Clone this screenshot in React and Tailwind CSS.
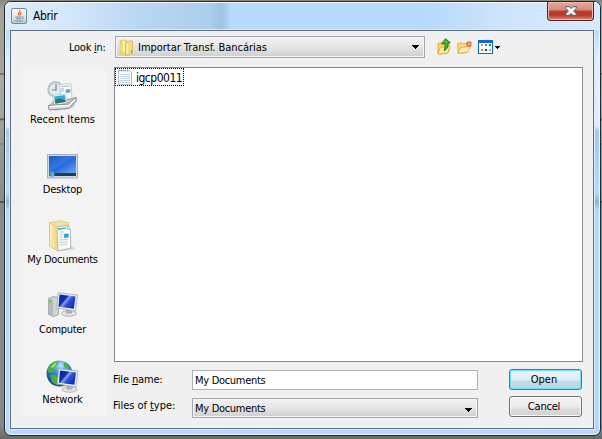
import React from "react";

const Label = ({ className = "", children }) => (
  <span className={`block whitespace-nowrap leading-[14px] ${className}`}>{children}</span>
);

const JavaIcon = () => (
  <svg width="16" height="16" viewBox="0 0 16 16">
    <defs>
      <linearGradient id="jv" x1="0" y1="0" x2="0" y2="1">
        <stop offset="0" stopColor="#fff" />
        <stop offset="1" stopColor="#c4c9cf" />
      </linearGradient>
    </defs>
    <rect x="0.5" y="0.5" width="15" height="15" rx="1.5" fill="url(#jv)" stroke="#7c8794" />
    <path d="M9 2c1 1.500-2 2.500-1.500 4 .2.700.8 1 .6 1.800M10.500 4.500c-1.500 1-1.500 1.500-.8 2.500" fill="none" stroke="#e8702a" strokeWidth="1.300" />
    <path d="M4.500 9h6M5 10.800h5M3.500 13h8.500M11 9c2-.5 2 1.500 0 2" fill="none" stroke="#6a87a6" strokeWidth=".9" />
  </svg>
);

const FolderIcon = () => (
  <svg width="16" height="17" viewBox="0 0 16 17">
    <path d="M1 1.500 7 1l1 .8V15l-1.500.8L1 14.500z" fill="#f3db7c" stroke="#e0c05c" strokeWidth=".7" />
    <path d="M6.500 3.500 12.500 1.500l1 .7v12.500l-7 1.500z" fill="#f6dd83" stroke="#d6b450" strokeWidth=".8" />
    <path d="M4 2h2v11l-2-.5z" fill="#fff3bd" />
    <path d="M7.500 4.500 9 4v11l-1.500.3z" fill="#fff0ac" />
    <path d="M12.500 11v3" stroke="#68add0" strokeWidth="1.200" />
  </svg>
);

const FileIcon = () => (
  <svg width="14" height="16" viewBox="0 0 14 16">
    <path d="M.5 1.500h11l2 2v12H.5z" fill="#f4f9fc" stroke="#a9b3b9" strokeWidth=".9" />
    <path d="M2 5.500h10M2 7.500h10M2 9.500h10M2 11.500h10M2 13.500h10" stroke="#bcd2df" strokeWidth=".9" />
    <path d="M1 1.500h10" stroke="#8d9a9f" strokeWidth="1.500" strokeDasharray="1 1" />
  </svg>
);

const UpIcon = () => (
  <svg width="15" height="17" viewBox="0 0 15 17">
    <path d="M1 5.500 4 4.500l1 1.500 7-.5V13l-2 2.500-9 .5z" fill="#f6d56b" stroke="#dca832" strokeWidth=".9" />
    <path d="M3.500 9.500 13 8.500 10.500 15 1 16z" fill="#fff0a0" stroke="#dca832" strokeWidth=".8" />
    <path d="M4.500 5.800 8.500.8l4.800 3.900-2.300.3c.3 4-.9 6.500-4 7.800 1.300-2.300 1.400-4.500.6-7.200z" fill="#4bb53c" stroke="#16701b" strokeWidth=".9" />
  </svg>
);

const NewFolderIcon = () => (
  <svg width="16" height="14" viewBox="0 0 16 14">
    <path d="M.7 3.500 4.500 2.500l1 1.300 5.500-.5V11l-1.500 1.500L1 13.300z" fill="#f6d97a" stroke="#dca94a" strokeWidth=".9" />
    <path d="M3.500 7.500 13.500 6.300 10.500 12.300 1 13.300z" fill="#fff0aa" stroke="#dca94a" strokeWidth=".9" />
    <path d="M12 1v6M9 4h6M9.800 1.800l4.400 4.400M14.200 1.800 9.800 6.200" stroke="#f0592d" strokeWidth="1.200" />
    <circle cx="12" cy="4" r="1.300" fill="#ffb27c" />
  </svg>
);

const ViewIcon = () => (
  <svg width="23" height="15" viewBox="0 0 23 15" shapeRendering="crispEdges">
    <rect x="0" y="0" width="15" height="14" fill="#0b67d5" />
    <rect x="1" y="3" width="13" height="10" fill="#fff" />
    <path d="M3 4h2v2H3z" fill="#a99bd0" />
    <path d="M7 4h2v2H7z" fill="#4b78cc" />
    <path d="M11 4h2v2h-2z" fill="#168f2a" />
    <path d="M3 9h2v2H3z" fill="#fa7558" />
    <path d="M7 9h2v2H7z" fill="#123f9c" />
    <path d="M11 9h2v2h-2z" fill="#d09a20" />
    <path d="M17 6h5v1h-1v1h-1v1h-1V8h-1V7h-1z" fill="#000" />
  </svg>
);

const RecentIcon = () => (
  <svg width="32" height="32" viewBox="0 0 32 32">
    <path d="M6 29 28 17l3 3-5 8-18 3z" fill="#000" opacity=".13" />
    <circle cx="8.500" cy="9.500" r="7.300" fill="#dfe9ee" stroke="#b0bfc8" strokeWidth="1.800" />
    <path d="M9 4v6H5" fill="none" stroke="#6f8896" strokeWidth="1.200" />
    <path d="M12.500 4.500 24 3.500l1 15-11 2z" fill="#fbfcfc" stroke="#b5bfc5" strokeWidth=".8" />
    <path d="M14 6.500 22.500 6M14 9l3-.2M14 11h3" stroke="#a4b4be" strokeWidth="1" />
    <path d="M18.500 9.500 23 9l.4 3.500-4.500.5z" fill="#56abc9" />
    <path d="m2 26 5-5.500L23.500 19 29 17.500 23.500 26z" fill="#c3c6c7" stroke="#8e9292" strokeWidth=".7" />
    <path d="M6 15.500 18.500 14l1.500 9-12.500 2z" fill="#fff" stroke="#a7bdc6" strokeWidth=".6" />
    <path d="M7 16.500 17.800 15l.8 4-10.800 1.500z" fill="#36a9e0" />
    <path d="m7.700 20 4-1.500 6.700 1 .4 2.500L8.300 23.800z" fill="#287868" />
    <path d="M1.500 25.500 21.500 24 29 17v3.500L22 28.500 2 30z" fill="#d8d9d9" stroke="#777b7b" strokeWidth=".8" />
    <path d="m3 26.700 19-1.400 6-5.500" fill="none" stroke="#fff" strokeWidth="1.300" />
  </svg>
);

const DesktopIcon = () => (
  <svg width="32" height="25" viewBox="0 0 32 25">
    <defs>
      <linearGradient id="dt" x1="0" y1="0" x2="1" y2="1">
        <stop offset="0" stopColor="#205bc5" />
        <stop offset=".42" stopColor="#3478dd" />
        <stop offset=".52" stopColor="#2968d8" />
        <stop offset="1" stopColor="#66aaf2" />
      </linearGradient>
    </defs>
    <rect x=".5" y=".5" width="30" height="23.500" fill="#d4d8dd" stroke="#a8b0b7" />
    <rect x="2" y="2" width="27" height="17" fill="url(#dt)" />
    <rect x="2" y="19" width="27" height="3" fill="#263b4d" />
    <circle cx="5" cy="20" r="2.700" fill="#3b9fc9" />
    <path d="M4 19h1v1H4z" fill="#f16a36" />
    <path d="M5.300 19h1v1h-1z" fill="#a7e56c" />
    <path d="M5.300 20.800h1v1h-1z" fill="#ffe162" />
  </svg>
);

const DocumentsIcon = () => (
  <svg width="32" height="32" viewBox="0 0 32 32">
    <defs>
      <linearGradient id="fd" x1="0" x2="1">
        <stop offset="0" stopColor="#fbefbc" />
        <stop offset="1" stopColor="#edd27a" />
      </linearGradient>
    </defs>
    <path d="M11 31 23 25l6 4-12 2z" fill="#000" opacity=".12" />
    <path d="M2.500 2.500 13 .8l8.500 2v22L12 28.500l-9.500-3z" fill="#f5e0a0" stroke="#dfc676" strokeWidth=".7" />
    <path d="M9.500 7 20 5.500l3.500 4 .3 18.500L11 31z" fill="#f8fafb" stroke="#9eabb2" strokeWidth=".8" />
    <path d="M20 5.500v4h3.500z" fill="#dce4e7" stroke="#9eabb2" strokeWidth=".6" />
    <path d="M12 12h5M12 14.500h4M12 17h4M12 20l9-.5M12 22.500l9-.5M12 25l8-.5" stroke="#c2ced6" strokeWidth="1" />
    <path d="m11 9 8-.8" stroke="#4eaa9a" strokeWidth="1.300" />
    <path d="m17 14 4.500-.5.3 4-4.600.5z" fill="#389dce" />
    <path d="M2.500 2.500 8.500 6l2 2.500v22.500l-8-5z" fill="url(#fd)" stroke="#d9bd68" strokeWidth=".7" />
  </svg>
);

const Monitor = ({ id }) => (
  <>
    <defs>
      <linearGradient id={id} x1="0" y1="0" x2="1" y2=".7">
        <stop offset="0" stopColor="#0b1ea9" />
        <stop offset=".4" stopColor="#0f2cb8" />
        <stop offset=".5" stopColor="#86a5ea" />
        <stop offset=".65" stopColor="#2c50cf" />
        <stop offset="1" stopColor="#0c2cc0" />
      </linearGradient>
    </defs>
    <ellipse cx="13" cy="21.500" rx="7.500" ry="2.800" fill="#e1e4e5" stroke="#a4aaad" strokeWidth=".8" />
    <path d="m10 17 6 1v3.500h-6z" fill="#aab1b5" />
    <path d="M2 .8 21.500 3l-2 16L.8 16z" fill="#eef1f2" stroke="#a1a9ad" strokeWidth=".8" />
    <path d="m3.500 2.500 16 2-1.600 12.300L2.500 14.800z" fill={`url(#${id})`} />
  </>
);

const ComputerIcon = () => (
  <svg width="32" height="32" viewBox="0 0 32 32">
    <path d="m1.500 8.500 5-2 5 1v17l-5 2-5-2z" fill="#ced3d4" stroke="#90989a" strokeWidth=".8" />
    <path d="m1.500 8.500 4.500 1.200V26l-4.500-1.500z" fill="#b4babc" />
    <path d="M3 10v3" stroke="#56d32c" strokeWidth="1.500" />
    <g transform="translate(9 2)"><Monitor id="cm" /></g>
  </svg>
);

const NetworkIcon = () => (
  <svg width="33" height="33" viewBox="0 0 33 33">
    <defs>
      <radialGradient id="gl" cx=".55" cy=".2" r=".8">
        <stop offset="0" stopColor="#b9e6fb" />
        <stop offset=".4" stopColor="#398ed7" />
        <stop offset="1" stopColor="#104490" />
      </radialGradient>
    </defs>
    <circle cx="13.500" cy="13.500" r="13" fill="url(#gl)" />
    <path d="M2 8C5 3 9 1 13 1l-2 4-3 2 1 3-3 3-4-1zM19 2l4.500 3.500-1 3-4-1.500-1-2.500zM4 15l5 0 4 4-1 7-6-4z" fill="#4fae3e" />
    <path d="M5 7c2-3 4-4 6-5L9 6l-3 2z" fill="#a6e66a" />
    <g transform="translate(10.500 8)"><Monitor id="nm" /></g>
  </svg>
);

const Place = ({ icon, children }) => (
  <div className="flex h-[70px] flex-col items-center pt-[12px]">
    <div className="flex h-[34px] items-center justify-center pr-[2px]">{icon}</div>
    <div className="pr-[2px]">{children}</div>
  </div>
);

const Arrow = () => (
  <svg width="7" height="4" viewBox="0 0 7 4" shapeRendering="crispEdges" className="shrink-0">
    <path d="M0 0h7v1H6v1H5v1H4v1H3V3H2V2H1V1H0z" fill="#000" />
  </svg>
);

const combo =
  "flex items-center border border-[#a5a7ab] bg-linear-to-b from-[#f3f3f3] via-[#e5e5e5] to-[#cfcfcf] shadow-[inset_0_0_0_1px_#f5f5f5]";

export default function App() {
  return (
    <div className="h-[439px] w-[602px] overflow-hidden bg-[linear-gradient(180deg,#87877e_0,#a4a396_10px,#a4a396_73px,#4c4c48_74px,#aaa99d_75px,#a5a59a_118px,#4c4c48_119px,#a2a298_121px,#9a9a94_143px,#5f7f96_144px,#999993_145px,#8c8c86_201px,#222222_202px,#8a8a8a_203px,#888888_425px,#686868_439px)] pl-[4px] pt-[1px] font-['DejaVu_Sans_Condensed','DejaVu_Sans',sans-serif] text-[11px] text-black [font-stretch:condensed]">
      <div className="flex h-[435px] w-[597px] flex-col rounded-[7px] border border-[#222b33] bg-[linear-gradient(180deg,#c1dcf5_0,#b9d9f8_28px,#e1eefb_55px,#dfedfa_124px,#a9c8e5_129px,#b8d9fa_190px,#94b2cf_200px,#b7d8fa_208px,#b7d8fa_100%)] shadow-[inset_0_0_0_1px_#e9f5ff]">
        <div className="flex h-[28px] shrink-0 justify-between rounded-t-[6px] bg-[linear-gradient(90deg,#dcebf9_0,#d5e8fb_60px,#bad7f3_130px,#accdec_205px,#9fc3e4_217px,#b7d9fb_226px,#b7d9fc_420px,#cfe4fa_500px,#d8eaff_100%)] shadow-[inset_0_1px_0_#f3faff]">
          <div className="flex pl-[6px] pt-[6px]">
            <JavaIcon />
            <Label className="ml-[6px] pt-px text-[12px] tracking-[-0.35px]">Abrir</Label>
          </div>
          <div className="mr-[6px] flex h-[19px] w-[47px] items-center justify-center rounded-b-[4px] border border-t-0 border-[#4b2124] bg-[linear-gradient(180deg,#e6aaa0_0,#d58b7e_8px,#bd3e28_9px,#b43a28_13px,#dc8a70_18px)] shadow-[inset_0_0_0_1px_#efb9ae]">
            <svg width="12" height="10" viewBox="0 0 12 10">
              <path d="M.7.700h3.600L6 2.600 7.700.700h3.600v1.600L8.500 5l2.800 2.700v1.600H7.700L6 7.400 4.300 9.300H.7V7.700L3.500 5 .7 2.300z" fill="#fff" stroke="#555c6b" strokeWidth="1" />
            </svg>
          </div>
        </div>

        <div className="ml-[5px] flex h-[399px] w-[584px] shrink-0 flex-col border border-[#5c6f86] bg-[#f0f0f0] shadow-[0_0_0_1px_#d9ecff]">
          <div className="flex h-[36px] shrink-0 pt-[5px]">
            <div className="w-[104px] pl-[58px] pt-[5px]">
              <Label className="tracking-[-0.25px]">Look <u className="underline-offset-1">i</u>n:</Label>
            </div>
            <div className={`${combo} h-[22px] w-[310px] pl-[3px] pr-[5px]`}>
              <FolderIcon />
              <Label className="ml-[3px] flex-1 pt-[2px] tracking-[-0.03px]">Importar Transf. Bancárias</Label>
              <Arrow />
            </div>
            <div className="flex pl-[12px] pt-[2px]">
              <UpIcon />
              <div className="ml-[5px] pt-[2px]"><NewFolderIcon /></div>
              <div className="ml-[5px] pt-[2px]"><ViewIcon /></div>
            </div>
          </div>

          <div className="flex pl-[10px]">
            <div className="h-[350px] w-[85px] shrink-0 bg-[#f3f3f3]">
              <Place icon={<RecentIcon />}><Label>Recent Items</Label></Place>
              <Place icon={<DesktopIcon />}><Label className="tracking-[-0.2px]">Desktop</Label></Place>
              <Place icon={<DocumentsIcon />}><Label className="tracking-[-0.3px]">My Documents</Label></Place>
              <Place icon={<ComputerIcon />}><Label className="tracking-[-0.3px]">Computer</Label></Place>
              <Place icon={<NetworkIcon />}><Label className="tracking-[-0.15px]">Network</Label></Place>
            </div>

            <div className="ml-[8px] w-[469px]">
              <div className="h-[295px] border border-[#828790] bg-white">
                <div className="flex h-[18px] w-[69px] items-center border border-dotted border-black pl-[2px]">
                  <FileIcon />
                  <Label className="ml-[4px] pt-[2px] text-[12px] tracking-[-0.5px]">igcp0011</Label>
                </div>
              </div>
              <div className="flex pt-[7px]">
                <div className="-ml-px w-[79px]">
                  <Label className="pt-[4px] tracking-[-0.15px]">File <u className="underline-offset-1">n</u>ame:</Label>
                  <Label className="pt-[12px] tracking-[-0.05px]">Files of <u className="underline-offset-1">t</u>ype:</Label>
                </div>
                <div className="w-[286px] pt-px">
                  <div className="flex h-[20px] items-center border border-[#abadb3] bg-white pl-[2px]">
                    <Label className="pt-[2px] tracking-[-0.3px]">My Documents</Label>
                  </div>
                  <div className={`${combo} mt-[8px] h-[20px] pl-[2px] pr-[5px]`}>
                    <Label className="flex-1 pt-[2px] tracking-[-0.3px]">My Documents</Label>
                    <div className="pt-[3px]"><Arrow /></div>
                  </div>
                </div>
                <div className="ml-[31px] flex w-[73px] flex-col gap-[6px]">
                  <button className="flex h-[21px] items-center justify-center rounded-[3px] border border-[#3c7fb1] bg-[linear-gradient(180deg,#edf5f9_0,#dfedf4_10px,#c6dce8_11px,#b9d3e1_20px)] pr-[3px] shadow-[inset_0_0_0_1px_#6edcf8]">
                    <Label>Open</Label>
                  </button>
                  <button className="flex h-[21px] items-center justify-center rounded-[3px] border border-[#707070] bg-[linear-gradient(180deg,#f2f2f2_0,#ebebeb_10px,#dddddd_11px,#cfcfcf_20px)] pr-[3px] shadow-[inset_0_0_0_1px_#fafafa]">
                    <Label className="tracking-[-0.2px]">Cancel</Label>
                  </button>
                </div>
              </div>
            </div>
          </div>
        </div>
      </div>
    </div>
  );
}
